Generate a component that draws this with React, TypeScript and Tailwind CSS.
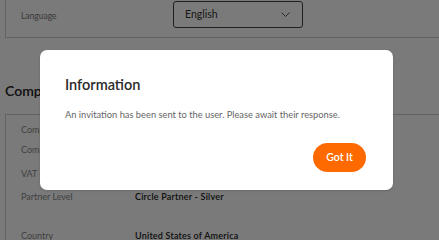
import React from 'react'

const font = { fontFamily: 'Lato, "Noto Sans", sans-serif' }

type RowProps = { label: string; value: string; className?: string }

const Row = ({ label, value, className }: RowProps) => (
  <div className={'flex items-center text-[9px] ' + (className || '')}>
    <div className="w-[114px] text-[#888]">{label}</div>
    <div className="font-semibold tracking-[0.2px] text-[#222]">{value}</div>
  </div>
)

export default function App() {
  return (
    <div className="relative h-[240px] w-[439px] overflow-hidden bg-white" style={font}>
      {/* page behind the dialog */}
      <div className="ml-[5px] flex h-[38px] items-start border-b border-l border-[#cfcfcf] pl-[15px]">
        <div className="mt-[10px] w-[152px] text-[8.5px] text-[#777]">Language</div>
        <div className="mt-[1px] flex h-[27px] w-[130px] items-center justify-between rounded-[3px] border border-[#444] pl-[11px] pr-[12px]">
          <span className="text-[10.5px] text-[#333]">English</span>
          <svg width="9" height="5" viewBox="0 0 9 5" fill="none" stroke="#555" strokeWidth="1">
            <path d="M0.5 0.5l4 4 4-4" />
          </svg>
        </div>
      </div>
      <div className="ml-[5px] mt-[42px] text-[14px] font-semibold text-[#222]">Company</div>
      <div className="ml-[5px] mt-[13px] flex flex-col border-l border-t border-[#cfcfcf] pl-[15px] pt-[9px]">
        <Row label="Company Name" value="Acme Networks Inc." className="h-[12px]" />
        <Row label="Company Address" value="1 Main Street" className="mt-[8px] h-[12px]" />
        <Row label="VAT ID" value="US123456789" className="mt-[12px] h-[12px]" />
        <Row label="Partner Level" value="Circle Partner - Silver" className="mt-[11px] h-[12px]" />
        <Row label="Country" value="United States of America" className="mt-[27px] h-[12px]" />
      </div>

      {/* dialog */}
      <div className="absolute inset-0 bg-black/[0.52]">
        <div className="absolute left-[40px] top-[50px] flex h-[140px] w-[353px] flex-col rounded-[7px] bg-white pl-[25px] pr-[27px] shadow">
          <div className="mt-[26px] text-[14.5px] font-semibold leading-[18px] text-[#2b2b2b]">Information</div>
          <div className="mt-[14px] whitespace-nowrap text-[9.3px] text-[#666]">
            An invitation has been sent to the user. Please await their response.
          </div>
          <div className="mt-auto mb-[18px] flex justify-end">
            <button className="h-[29px] w-[53px] rounded-full bg-[#ff6a00] text-[10.5px] font-semibold text-white">
              Got It
            </button>
          </div>
        </div>
      </div>
    </div>
  )
}
